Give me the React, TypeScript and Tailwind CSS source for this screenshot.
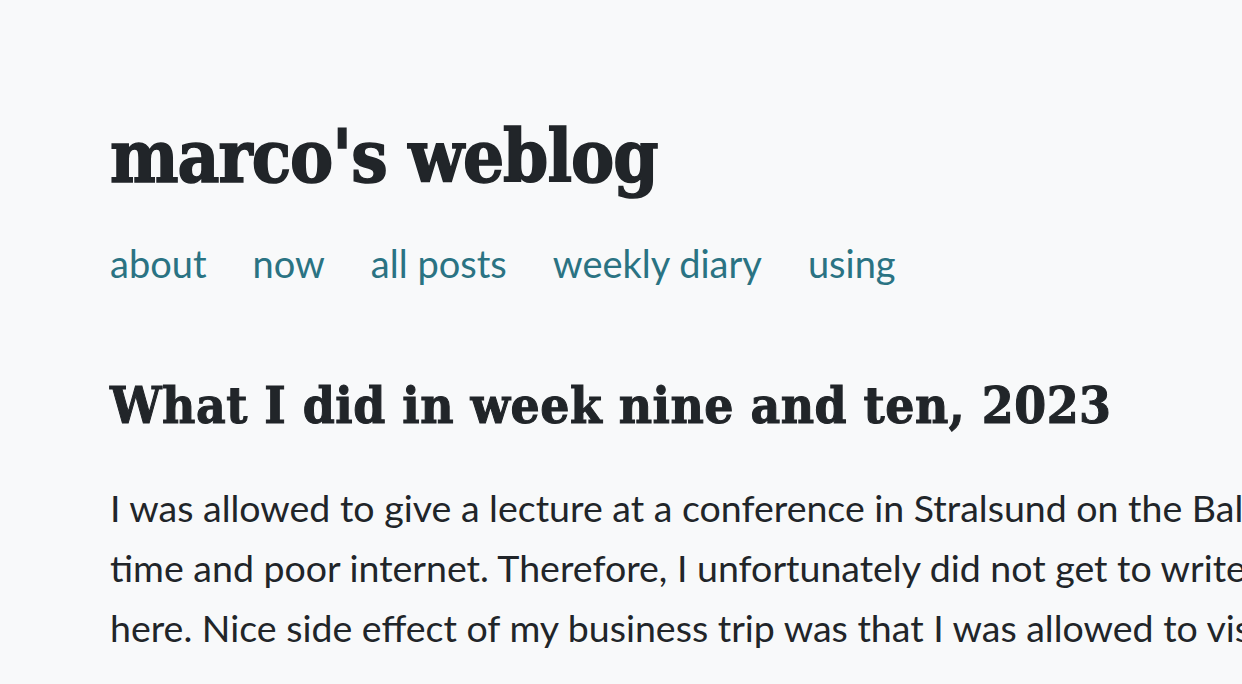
export default function App() {
  const links = ['about', 'now', 'all posts', 'weekly diary', 'using']

  return (
    <div className="min-h-screen w-full overflow-hidden bg-[#f8f9fa] text-[#212529]">
      <div className="w-[1600px] pl-[110px] pt-[112px]">
        {/* Site title */}
        <h1 className="font-['DejaVu_Serif_Condensed','DejaVu_Serif',serif] text-[72px] font-bold leading-[90px] tracking-[-1px] [-webkit-text-stroke:1.5px_#212529]">
          marco's weblog
        </h1>

        {/* Nav */}
        <nav className="mt-[36px] flex gap-[46px] font-['Lato',sans-serif] text-[38px] leading-[50px] text-[#2a7383]">
          {links.map((l) => (
            <a key={l} href="#">
              {l}
            </a>
          ))}
        </nav>

        {/* Post */}
        <article className="mt-[85px]">
          <h2 className="font-['DejaVu_Serif_Condensed','DejaVu_Serif',serif] text-[51px] font-bold leading-[64px] tracking-[0.5px] [-webkit-text-stroke:1px_#212529]">
            What I did in week nine and ten, 2023
          </h2>
          <p className="mt-[41px] whitespace-nowrap font-['Lato',sans-serif] text-[37.5px] leading-[60px]">
            I was allowed to give a lecture at a conference in Stralsund on the Baltic Sea and had very little free
            <br />
            time and poor internet. Therefore, I unfortunately did not get to write my weekly diary last week, so it follows
            <br />
            here. Nice side effect of my business trip was that I was allowed to visit the beautiful old town of Stralsund.
          </p>
        </article>
      </div>
    </div>
  )
}
